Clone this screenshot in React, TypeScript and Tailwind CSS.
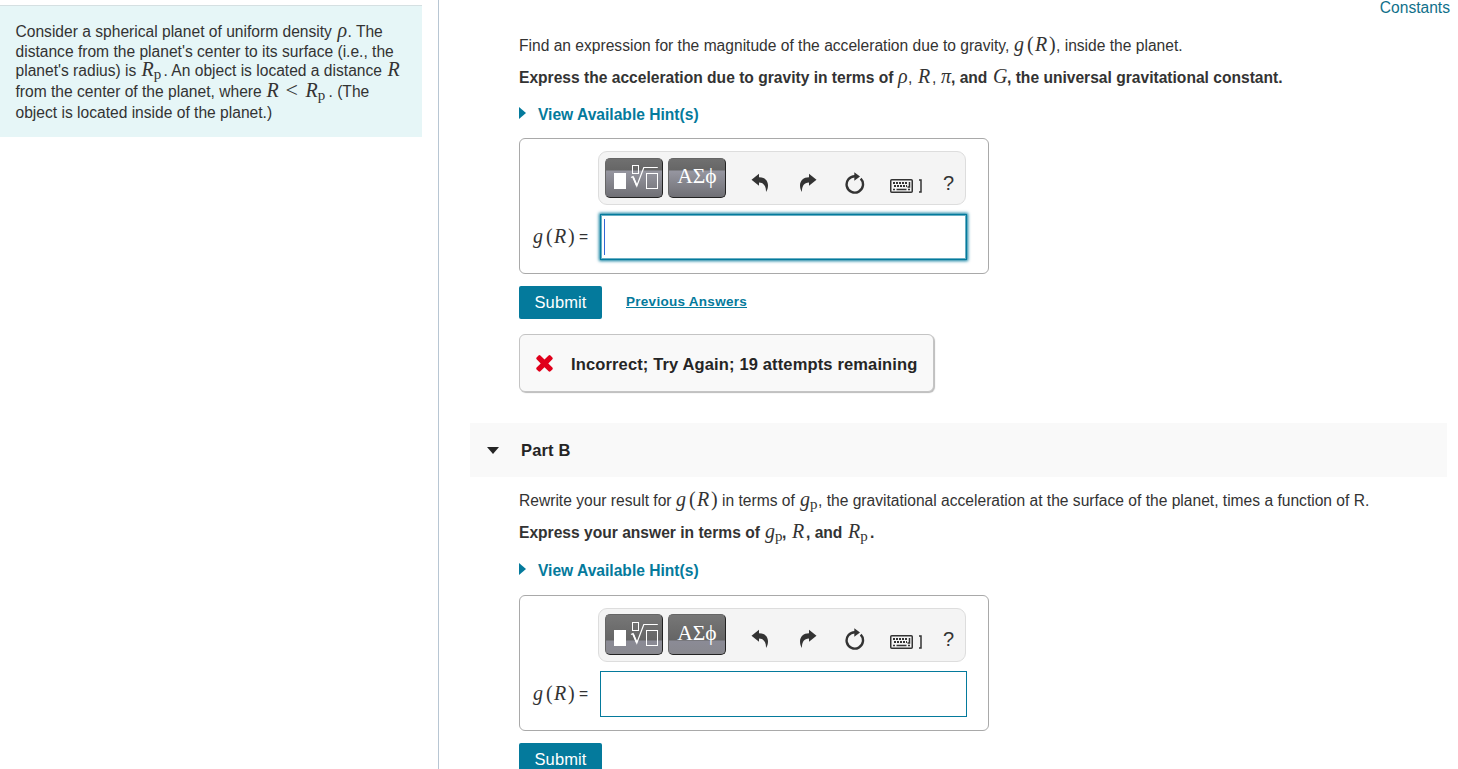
import React from "react";

interface ChunkProps {
  className?: string;
  children: React.ReactNode;
}

const Chunk: React.FC<ChunkProps> = ({ className = "", children }) => (
  <span className={`inline-block whitespace-pre ${className}`}>{children}</span>
);

const MathText: React.FC<ChunkProps> = ({ className = "", children }) => (
  <span
    className={`inline-block whitespace-pre font-['Liberation_Serif',serif] text-[20px] font-normal leading-[0] ${className}`}
  >
    {children}
  </span>
);

const Sub: React.FC = () => (
  <span className="relative top-[3px] text-[15px] not-italic">p</span>
);

const RootIcon: React.FC = () => (
  <svg width="56" height="38" viewBox="0 0 56 38" fill="none" stroke="#fff" className="shrink-0">
    <rect x="8" y="14" width="12" height="16" fill="#fff" stroke="none" />
    <rect x="26.500" y="6.500" width="6" height="8" />
    <path d="M25 18.500l2-1 3.800 9.500 7-18.500h14" strokeWidth="1.200" />
    <path d="M27 17.800l3.700 8.500" strokeWidth="1.800" />
    <rect x="40.500" y="14.500" width="11" height="15" />
  </svg>
);

const UndoIcon: React.FC<{ className?: string }> = ({ className = "" }) => (
  <svg width="18" height="20" viewBox="0 0 18 20" className={className}>
    <path
      d="M.5 6.700L8 .7V4.200C13.500 4.200 17 7.500 17 12.500C17 15 16.300 17 15 19C15.200 13 13 9.800 8 9.500V12.700Z"
      fill="#333"
    />
  </svg>
);

const ResetIcon: React.FC = () => (
  <svg width="20" height="23" viewBox="0 0 20 23" fill="none">
    <path d="M10 4.200A8.200 8.200 0 1 0 15.700 6.700" stroke="#333" strokeWidth="2.400" />
    <path d="M9.300 .2L15 4.500L9.300 8.700Z" fill="#333" />
  </svg>
);

const KeyboardIcon: React.FC = () => (
  <svg width="32" height="14" viewBox="0 0 32 14" fill="none" stroke="#333">
    <rect x=".75" y=".75" width="21.500" height="12.500" rx="1" strokeWidth="1.500" />
    <path d="M3 4h14M4 7h13" strokeWidth="1.800" strokeDasharray="2 1" />
    <path d="M3 10.500h2M6.500 10.500h10M18 10.500h2" strokeWidth="1.600" />
    <path d="M19.500 3v5h-2" strokeWidth="1.500" />
    <path d="M29 1h2v12h-2" strokeWidth="1.500" />
  </svg>
);

const HintLink: React.FC = () => (
  <div className="flex h-5 items-center pt-0.5 font-bold text-[#047a9c]">
    <svg width="7" height="12" viewBox="0 0 7 12" className="relative -top-[2px] mr-3">
      <path d="M0 0L7 6L0 12Z" fill="#047a9c" />
    </svg>
    <span>View Available Hint(s)</span>
  </div>
);

const AnswerBox: React.FC<{ focused?: boolean }> = ({ focused = false }) => {
  const button = `flex w-[58px] shrink-0 items-center justify-center rounded-[5px] border border-[#666] border-r-[#222] border-b-[#222] text-white ${
    focused
      ? "h-10 bg-[linear-gradient(#707070_0px,#666_11px,#9696a0_12px,#707075_100%)]"
      : "h-[41px] bg-[linear-gradient(#777_0px,#656565_25px,#8b8b96_26px,#88888e_100%)]"
  }`;

  return (
    <div className="h-[136px] w-[470px] rounded-[6px] border border-[#a9a9a9] pt-3">
      <div
        className={`ml-[78px] flex h-[54px] w-[368px] rounded-[9px] border border-[#ddd] bg-[#f4f4f4] pl-1.5 text-[#333] ${
          focused ? "pt-1.5" : "pt-[5px]"
        }`}
      >
        <button className={button}>
          <RootIcon />
        </button>
        <button
          className={`${button} ml-[5px] pb-1 font-['Liberation_Serif',serif] text-[21.5px]`}
        >
          ΑΣϕ
        </button>
        <UndoIcon className="mt-[15px] ml-[25px]" />
        <UndoIcon className="mt-[15px] ml-[30px] -scale-x-100" />
        <div className="mt-3.5 ml-7">
          <ResetIcon />
        </div>
        <div className="mt-[21px] ml-[25px]">
          <KeyboardIcon />
        </div>
        <span className="mt-[13px] ml-[21px] text-[20px] leading-6">?</span>
      </div>
      <div className="mt-[9px] flex">
        <div className="w-20 shrink-0 pt-3 pl-[13px] text-[#333]">
          <MathText className="relative top-px w-[13px] italic">g</MathText>
          <MathText className="relative top-px w-[8px]">(</MathText>
          <MathText className="relative top-px w-[14px] italic">R</MathText>
          <MathText className="relative top-px w-[11px]">)</MathText>
          <Chunk>=</Chunk>
        </div>
        <div
          className={`h-[46px] w-[367px] border border-[#047a9c] bg-white pt-1 pl-[3px] ${
            focused ? "shadow-[0_0_3px_1px_#047a9c,inset_0_0_0_1px_#047a9c99]" : ""
          }`}
        >
          {focused && <div className="h-9 w-px bg-[#3367d6]" />}
        </div>
      </div>
    </div>
  );
};

const SubmitButton: React.FC = () => (
  <button className="h-[33px] w-[83px] shrink-0 rounded-[2px] bg-[#047a9c] pb-0.5 text-[16.5px] leading-5 tracking-[0.1px] text-white">
    Submit
  </button>
);

const App: React.FC = () => {
  return (
    <div className="flex h-[769px] w-[1458px] overflow-hidden bg-white font-['Liberation_Sans',Arial,sans-serif] text-[15.6px] leading-[22px] text-[#333]">
      {/* Problem statement */}
      <aside className="w-[439px] shrink-0 border-r border-[#b8c6d3] pt-[5px]">
        <div className="h-[132px] w-[422px] border-t border-[#d5e0e2] bg-[#e6f6f7] pt-[15px] pl-[15.5px]">
          <div className="h-5">
            <Chunk className="w-[322px]">Consider a spherical planet of uniform density</Chunk>
            <MathText className="w-[10px] italic">ρ</MathText>
            <Chunk>. The</Chunk>
          </div>
          <div className="h-[19px]">distance from the planet's center to its surface (i.e., the</div>
          <div className="h-[21px]">
            <Chunk className="w-[126px]">planet's radius) is</Chunk>
            <MathText className="w-[22px] italic">R<Sub /></MathText>
            <Chunk className="w-[224px]">. An object is located a distance</Chunk>
            <MathText className="italic">R</MathText>
          </div>
          <div className="h-[21px]">
            <Chunk className="w-[251px]">from the center of the planet, where</Chunk>
            <MathText className="w-[19px] italic">R</MathText>
            <MathText className="w-[20px] text-[22px]">&lt;</MathText>
            <MathText className="w-[23px] italic">R<Sub /></MathText>
            <Chunk>. (The</Chunk>
          </div>
          <div className="h-5">object is located inside of the planet.)</div>
        </div>
      </aside>

      <main className="min-w-0 flex-1 pl-[31px]">
        <div className="h-[35px] pr-2 text-right leading-[15px] text-[#10708a]">Constants</div>

        {/* Part A */}
        <section className="pl-[49px]">
          <div className="h-8 whitespace-nowrap">
            <Chunk className="w-[495px]">
              Find an expression for the magnitude of the acceleration due to gravity,
            </Chunk>
            <MathText className="w-[13px] italic">g</MathText>
            <MathText className="w-[8px]">(</MathText>
            <MathText className="w-[14px] italic">R</MathText>
            <MathText className="w-[7px]">)</MathText>
            <Chunk>, inside the planet.</Chunk>
          </div>
          <div className="h-[37px] font-bold whitespace-nowrap">
            <Chunk className="w-[379px]">Express the acceleration due to gravity in terms of</Chunk>
            <MathText className="w-[10px] italic">ρ</MathText>
            <Chunk className="w-[10px] font-normal">,</Chunk>
            <MathText className="w-[14px] italic">R</MathText>
            <Chunk className="w-[9px] font-normal">,</Chunk>
            <MathText className="w-[10px] italic">π</MathText>
            <Chunk className="w-[42px]">, and</Chunk>
            <MathText className="w-[14px] italic">G</MathText>
            <Chunk>, the universal gravitational constant.</Chunk>
          </div>
          <HintLink />
          <div className="mt-3.5">
            <AnswerBox focused />
          </div>
          <div className="mt-3 flex h-[33px]">
            <SubmitButton />
            <a className="mt-[5px] ml-6 text-[13.5px] font-bold tracking-[0.28px] text-[#047a9c] underline">
              Previous Answers
            </a>
          </div>
          <div className="mt-[15px] flex h-[58px] w-[415px] items-center rounded-[6px] border border-[#c4c4c4] bg-[#f9f9f9] pl-3 shadow-[1px_1px_1px_#bbb]">
            <svg
              width="25"
              height="25"
              viewBox="0 0 1792 1792"
              className="relative -top-px shrink-0"
              fill="#e0001b"
            >
              <path d="M1490 1322q0 40-28 68l-136 136q-28 28-68 28t-68-28l-294-294-294 294q-28 28-68 28t-68-28l-136-136q-28-28-28-68t28-68l294-294-294-294q-28-28-28-68t28-68l136-136q28-28 68-28t68 28l294 294 294-294q28-28 68-28t68 28l136 136q28 28 28 68t-28 68l-294 294 294 294q28 28 28 68z" />
            </svg>
            <span className="ml-3.5 pt-px text-[16.5px] font-bold tracking-[0.14px] whitespace-nowrap text-[#252525]">
              Incorrect; Try Again; 19 attempts remaining
            </span>
          </div>
        </section>

        {/* Part B */}
        <div className="mt-[31px] mr-[11px] flex h-[54px] items-center bg-[#f9f9f9] pl-[17px]">
          <svg width="12" height="7" viewBox="0 0 12 7">
            <path d="M0 0H12L6 7Z" fill="#252525" />
          </svg>
          <span className="ml-[22px] pb-px text-[16.5px] font-bold tracking-[0.14px] text-[#252525]">
            Part B
          </span>
        </div>
        <section className="pt-[13px] pl-[49px]">
          <div className="h-8 whitespace-nowrap">
            <Chunk className="w-[157px]">Rewrite your result for</Chunk>
            <MathText className="w-[13px] italic">g</MathText>
            <MathText className="w-[8px]">(</MathText>
            <MathText className="w-[14px] italic">R</MathText>
            <MathText className="w-[11px]">)</MathText>
            <Chunk className="w-[78px]">in terms of</Chunk>
            <MathText className="w-[18px] italic">g<Sub /></MathText>
            <Chunk>
              , the gravitational acceleration at the surface of the planet, times a function of R.
            </Chunk>
          </div>
          <div className="h-[38px] font-bold whitespace-nowrap">
            <Chunk className="w-[246px]">Express your answer in terms of</Chunk>
            <MathText className="w-[17px] italic">g<Sub /></MathText>
            <Chunk className="w-[10px]">,</Chunk>
            <MathText className="w-[14px] italic">R</MathText>
            <Chunk className="w-[42px]">, and</Chunk>
            <MathText className="w-[22px] italic">R<Sub /></MathText>
            <Chunk>.</Chunk>
          </div>
          <HintLink />
          <div className="mt-[15px]">
            <AnswerBox />
          </div>
          <div className="mt-3 flex">
            <SubmitButton />
          </div>
        </section>
      </main>
    </div>
  );
};

export default App;
